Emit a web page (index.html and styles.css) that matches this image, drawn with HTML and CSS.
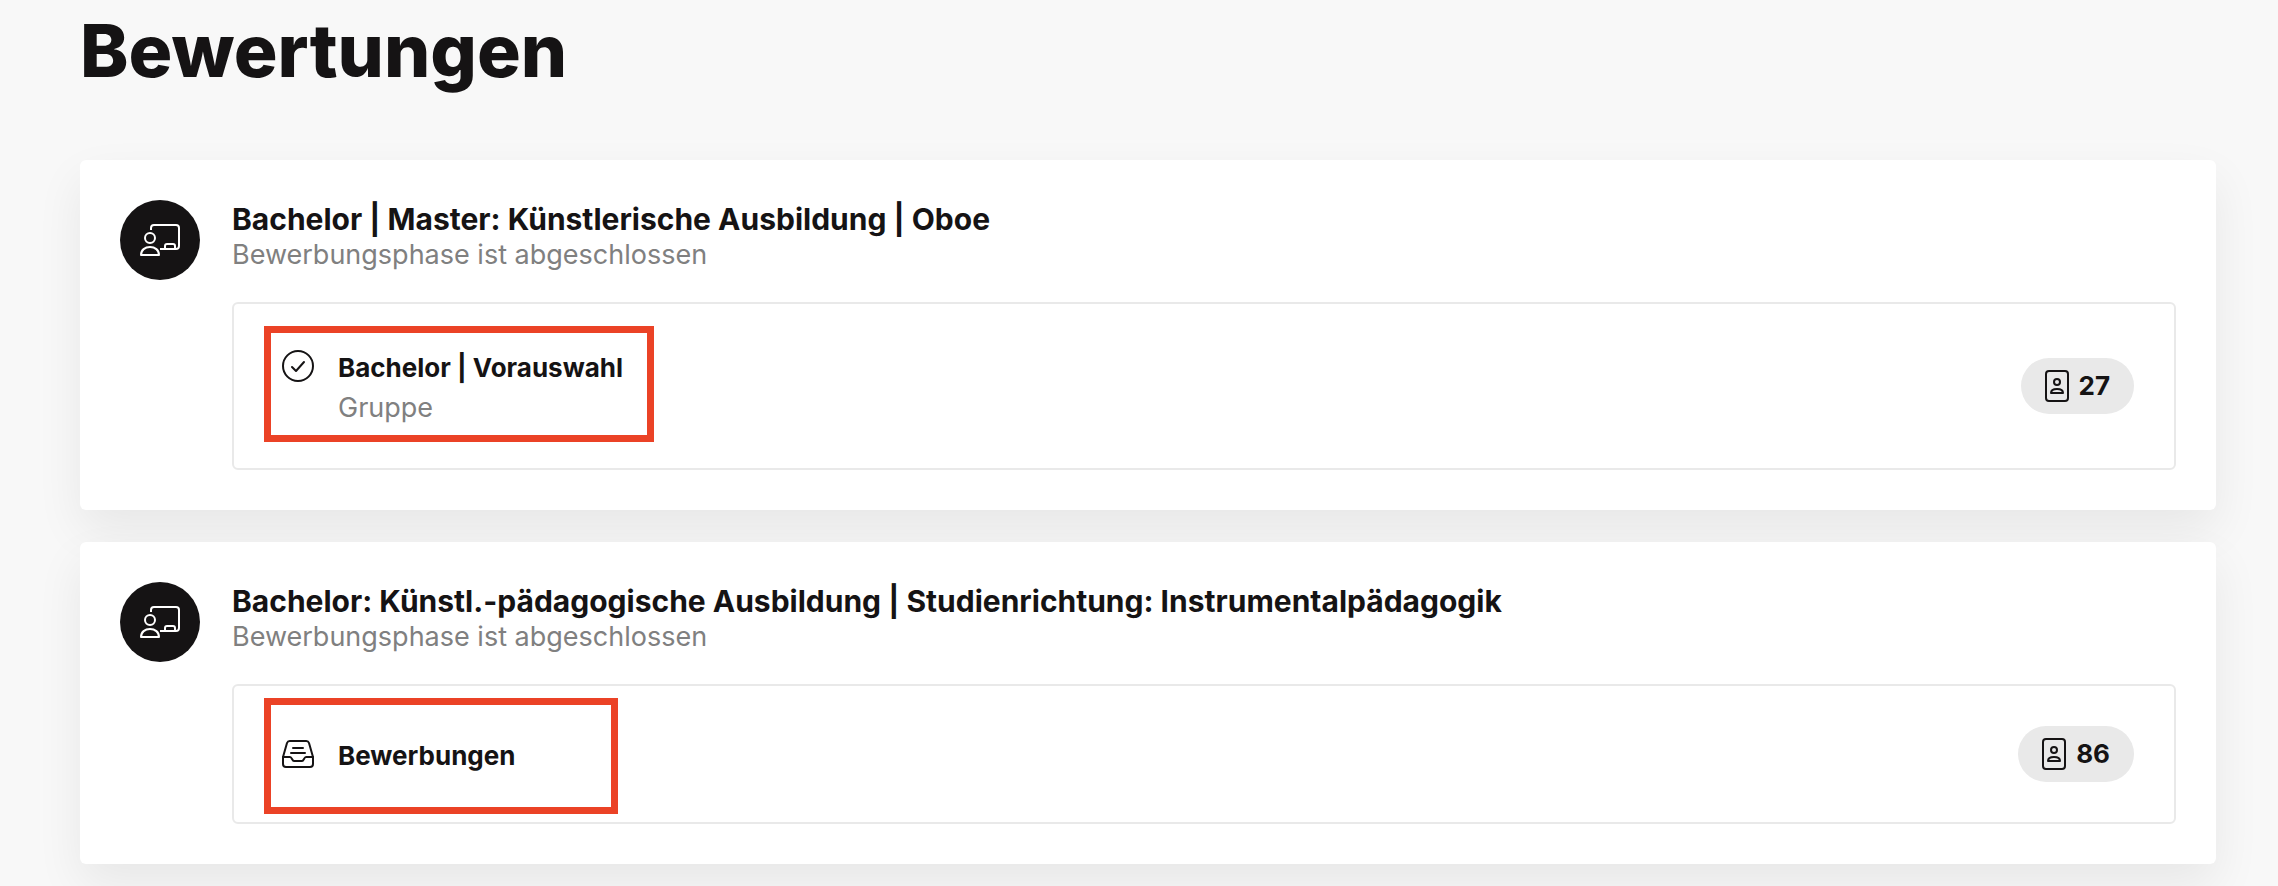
FILE: index.html
```html
<!DOCTYPE html>
<html lang="de">
<head>
<meta charset="utf-8">
<title>Bewertungen</title>
<link rel="stylesheet" href="styles.css">
</head>
<body>
<svg class="sprite" aria-hidden="true">
  <symbol id="teacher" viewBox="0 0 40 32">
    <g fill="none" stroke="currentColor" stroke-width="2" stroke-linejoin="round">
      <circle cx="10" cy="14" r="5"/>
      <path d="M1 31c0-5 4-8 9-8s9 3 9 8z"/>
      <path d="M11 6V4a3 3 0 0 1 3-3h22a3 3 0 0 1 3 3v18a3 3 0 0 1-3 3H20"/>
      <path d="M25 25v-3a2 2 0 0 1 2-2h6a2 2 0 0 1 2 2v3"/>
    </g>
  </symbol>
  <symbol id="check" viewBox="0 0 32 32">
    <g fill="none" stroke="currentColor" stroke-width="2" stroke-linecap="round" stroke-linejoin="round">
      <circle cx="16" cy="16" r="15"/>
      <path d="M10 17l4 4 8-9"/>
    </g>
  </symbol>
  <symbol id="inbox" viewBox="0 0 32 32">
    <g fill="none" stroke="currentColor" stroke-width="2" stroke-linecap="round" stroke-linejoin="round">
      <path d="M1 19L5 5a3 3 0 0 1 3-2h16a3 3 0 0 1 3 2l4 14v7a3 3 0 0 1-3 3H4a3 3 0 0 1-3-3z"/>
      <path d="M1 19h7c2 0 2 4 4 4h8c2 0 2-4 4-4h7M9 15h14M11 10h10"/>
    </g>
  </symbol>
  <symbol id="applicant" viewBox="0 0 24 32">
    <g fill="none" stroke="currentColor" stroke-width="2" stroke-linejoin="round">
      <rect x="1" y="1" width="22" height="30" rx="3"/>
      <circle cx="12" cy="12" r="3"/>
      <path d="M6 23c0-3 2-4 6-4s6 1 6 4z"/>
    </g>
  </symbol>
</svg>
<main class="page">
  <h1 class="page-title">Bewertungen</h1>

  <section class="card">
    <span class="avatar"><svg class="avatar-icon"><use href="#teacher"/></svg></span>
    <div class="card-body">
      <h2 class="card-title">Bachelor | Master: Künstlerische Ausbildung | Oboe</h2>
      <p class="card-status">Bewerbungsphase ist abgeschlossen</p>
      <a class="phase" href="#vorauswahl">
        <span class="phase-label">
          <svg class="phase-icon"><use href="#check"/></svg>
          <span class="phase-text">
            <strong class="phase-name">Bachelor | Vorauswahl</strong>
            <span class="phase-kind">Gruppe</span>
          </span>
        </span>
        <span class="count"><svg class="count-icon"><use href="#applicant"/></svg>27</span>
        <span class="marker marker-wide"></span>
      </a>
    </div>
  </section>

  <section class="card">
    <span class="avatar"><svg class="avatar-icon"><use href="#teacher"/></svg></span>
    <div class="card-body">
      <h2 class="card-title">Bachelor: Künstl.-pädagogische Ausbildung | Studienrichtung: Instrumentalpädagogik</h2>
      <p class="card-status">Bewerbungsphase ist abgeschlossen</p>
      <a class="phase" href="#bewerbungen">
        <span class="phase-label">
          <svg class="phase-icon"><use href="#inbox"/></svg>
          <span class="phase-text">
            <strong class="phase-name">Bewerbungen</strong>
          </span>
        </span>
        <span class="count"><svg class="count-icon"><use href="#applicant"/></svg>86</span>
        <span class="marker marker-narrow"></span>
      </a>
    </div>
  </section>
</main>
</body>
</html>
```
FILE: styles.css
```css
* {
  box-sizing: border-box;
}

body {
  margin: 0;
  background: #f8f8f8;
  color: #151314;
  font-family: Inter, "Liberation Sans", sans-serif;
  font-size: 27px;
  line-height: 40px;
}

.sprite {
  display: none;
}

.page {
  display: flex;
  flex-direction: column;
  gap: 32px;
  padding: 0 62px 22px 80px;
}

.page-title {
  margin: 0 0 28px;
  font-size: 73px;
  font-weight: 800;
  line-height: 102px;
  height: 100px;
}

.card {
  display: flex;
  gap: 32px;
  padding: 40px;
  border-radius: 6px;
  background: #fff;
  box-shadow: 0 20px 48px rgba(0, 0, 0, 0.07);
}

.avatar {
  display: flex;
  flex: none;
  align-items: center;
  justify-content: center;
  width: 80px;
  height: 80px;
  border-radius: 50%;
  background: #151314;
  color: #fff;
}

.avatar-icon {
  width: 40px;
  height: 32px;
}

.card-body {
  flex: 1;
  min-width: 0;
}

.card-title {
  margin: 0;
  font-size: 30px;
  font-weight: 700;
  line-height: 38px;
}

.card-status {
  margin: 0 0 30px;
  color: #808080;
  line-height: 34px;
}

.phase {
  position: relative;
  display: flex;
  align-items: center;
  gap: 24px;
  padding: 40px 40px 40px 48px;
  border: 2px solid #e9e9e9;
  border-radius: 6px;
  color: inherit;
  text-decoration: none;
}

.phase-label {
  display: flex;
  flex: 1;
  gap: 24px;
}

.phase-icon {
  flex: none;
  width: 32px;
  height: 32px;
  margin-top: 6px;
}

.phase-text {
  flex: 1;
  padding-top: 4px;
}

.phase-name,
.phase-kind {
  display: block;
}

.phase-name {
  font-size: 26px;
  font-weight: 700;
}

.phase-kind {
  color: #808080;
}

.count {
  display: flex;
  align-items: center;
  gap: 10px;
  height: 56px;
  padding: 0 24px;
  border-radius: 28px;
  background: #e9e9e9;
  font-size: 26px;
  font-weight: 700;
}

.count-icon {
  width: 24px;
  height: 32px;
}

/* Red frame drawn over a phase row to call attention to it. */
.marker {
  position: absolute;
  left: 30px;
  height: 116px;
  border: 7px solid #eb4226;
  pointer-events: none;
}

.marker-wide {
  top: 22px;
  width: 390px;
}

.marker-narrow {
  top: 12px;
  width: 354px;
}
```
